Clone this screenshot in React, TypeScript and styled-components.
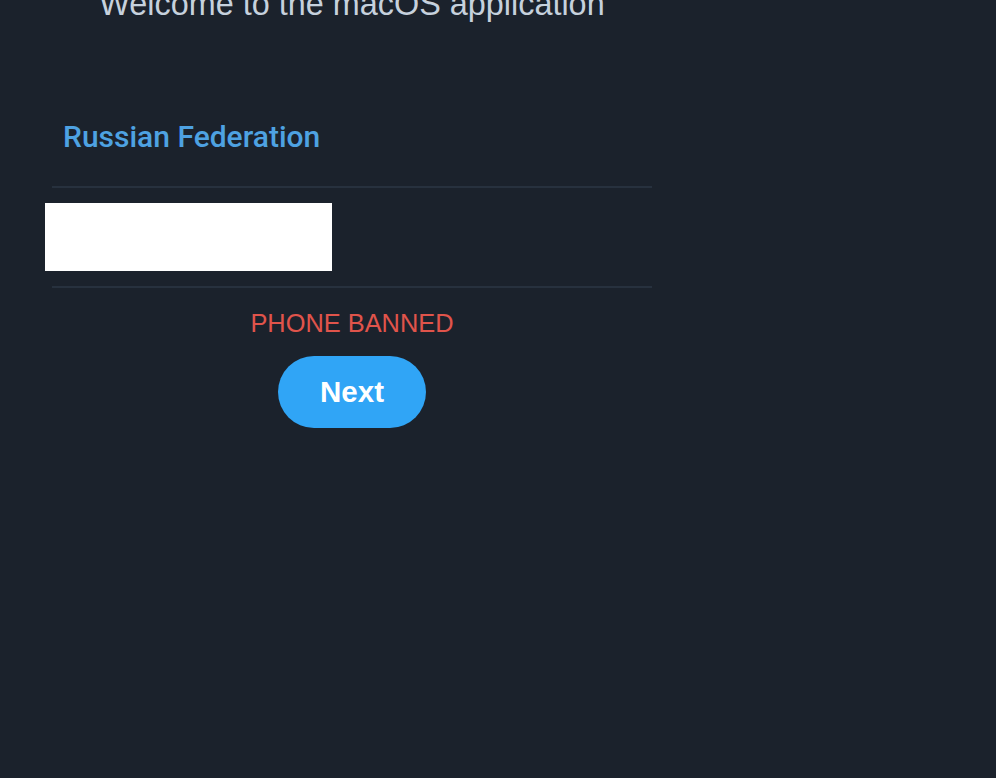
import styled, { createGlobalStyle } from "styled-components";

const GlobalStyle = createGlobalStyle`
    html, body {
        margin: 0;
        padding: 0;
        background-color: #1b222c;
        height: 100%;
        overflow: hidden;
    }
`;

const App = () => {
    return (
        <>
            <GlobalStyle />
            <StyledPage>
                <StyledColumn>
                    <StyledTitle>Welcome to the macOS application</StyledTitle>
                    <StyledCountry>Russian Federation</StyledCountry>
                    <StyledDivider />
                    <StyledPhoneRow>
                        <StyledPhoneMask aria-label="Phone number" />
                    </StyledPhoneRow>
                    <StyledDivider />
                    <StyledError>PHONE BANNED</StyledError>
                    <StyledNextButton type='button'>Next</StyledNextButton>
                </StyledColumn>
            </StyledPage>
        </>
    );
};

const StyledPage = styled.div`
    min-height: 100vh;
    padding-left: 52px;
    background-color: #1b222c;
`;

const StyledColumn = styled.div`
    width: 600px;
    display: flex;
    flex-direction: column;
`;

const StyledTitle = styled.h1`
    margin: -16px 0 0;
    font-family: "Liberation Sans", Arial, sans-serif;
    font-weight: 400;
    font-size: 32.4px;
    line-height: 40px;
    color: #c6d1dd;
    text-align: center;
`;

const StyledCountry = styled.div`
    margin: 95px 0 31px 11px;
    font-family: Roboto, "Liberation Sans", sans-serif;
    font-weight: 500;
    font-size: 30px;
    line-height: 36px;
    color: #4ea2e2;
`;

const StyledDivider = styled.div`
    height: 2px;
    background-color: #27313e;
`;

const StyledPhoneRow = styled.div`
    display: flex;
    align-items: center;
    height: 98px;
`;

const StyledPhoneMask = styled.div`
    margin-left: -7px;
    width: 287px;
    height: 68px;
    background-color: #ffffff;
`;

const StyledError = styled.div`
    margin-top: 20px;
    font-family: "Liberation Sans", Arial, sans-serif;
    font-size: 25.4px;
    line-height: 30px;
    color: #e0544b;
    text-align: center;
`;

const StyledNextButton = styled.button`
    align-self: center;
    margin-top: 18px;
    width: 148px;
    height: 72px;
    border: none;
    border-radius: 36px;
    background-color: #30a5f6;
    color: #ffffff;
    font-family: "Liberation Sans", Arial, sans-serif;
    font-weight: 700;
    font-size: 29.5px;
    cursor: pointer;
`;

export default App;
